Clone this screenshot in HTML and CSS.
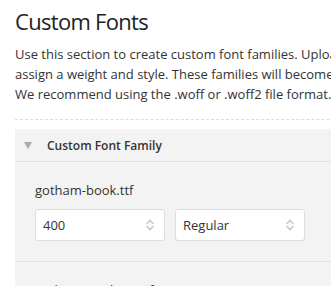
FILE: index.html
```html
<!DOCTYPE html>
<html>
<head>
<meta charset="utf-8">
<link rel="stylesheet" href="styles.css">
</head>
<body>
<div class="page">
  <h1 class="title">Custom Fonts</h1>
  <p class="desc"><span class="line">Use this section to create custom font families. Upload your font files and</span><span class="line">assign a weight and style. These families will become available in the font dropdowns.</span><span class="line">We recommend using the .woff or .woff2 file format.</span></p>
  <div class="divider"></div>
  <div class="panel">
    <div class="panel-head">
      <span class="caret"></span>
      <span class="panel-title">Custom Font Family</span>
    </div>
    <div class="file-row">
      <div class="file-name">gotham-book.ttf</div>
      <div class="selects">
        <div class="select"><span>400</span><svg class="arrows" width="10" height="12" viewBox="0 0 10 12"><path d="M1.5 5 L5 1.5 L8.5 5" fill="none" stroke="#c8c8c8" stroke-width="1.6"/><path d="M1.5 7 L5 10.5 L8.5 7" fill="none" stroke="#c8c8c8" stroke-width="1.6"/></svg></div>
        <div class="select"><span>Regular</span><svg class="arrows" width="10" height="12" viewBox="0 0 10 12"><path d="M1.5 5 L5 1.5 L8.5 5" fill="none" stroke="#c8c8c8" stroke-width="1.6"/><path d="M1.5 7 L5 10.5 L8.5 7" fill="none" stroke="#c8c8c8" stroke-width="1.6"/></svg></div>
      </div>
    </div>
    <div class="file-row">
      <div class="file-name">gotham-medium.ttf</div>
    </div>
  </div>
</div>
</body>
</html>
```
FILE: styles.css
```css
html, body {
  margin: 0;
  padding: 0;
  background: #fff;
  overflow: hidden;
}
body {
  font-family: "Open Sans", sans-serif;
  color: #333;
}
.page {
  padding: 6px 0 0 15px;
  width: 420px;
}
.title {
  margin: 0;
  font-size: 22px;
  letter-spacing: -0.7px;
  font-weight: 400;
  line-height: 30px;
  color: #222;
}
.desc {
  margin: 8px 0 0;
  font-size: 13px;
  line-height: 20px;
  color: #333;
}
.line {
  display: block;
  white-space: nowrap;
}
.divider {
  margin-top: 15px;
  border-top: 1px dashed #ddd;
}
.panel {
  margin-top: 9px;
  background: #f3f3f3;
}
.panel-head {
  height: 32px;
  display: flex;
  align-items: center;
  border-bottom: 1px solid #e1e1e1;
  padding-left: 9px;
}
.caret {
  width: 0;
  height: 0;
  border-left: 4px solid transparent;
  border-right: 4px solid transparent;
  border-top: 7px solid #aaa;
  margin-right: 15px;
}
.panel-title {
  font-size: 12px;
  font-weight: 600;
  color: #333;
}
.file-row {
  padding: 19px 20px 20px;
  border-bottom: 1px solid #e1e1e1;
}
.file-name {
  font-size: 13px;
  line-height: 18px;
  color: #333;
}
.selects {
  display: flex;
  gap: 10px;
  margin-top: 10px;
}
.select {
  box-sizing: border-box;
  width: 130px;
  height: 32px;
  background: #fff;
  border: 1px solid #ddd;
  border-radius: 3px;
  display: flex;
  align-items: center;
  justify-content: space-between;
  padding: 0 9px 0 7px;
  font-size: 13px;
  color: #333;
}
.arrows {
  display: block;
}
```
